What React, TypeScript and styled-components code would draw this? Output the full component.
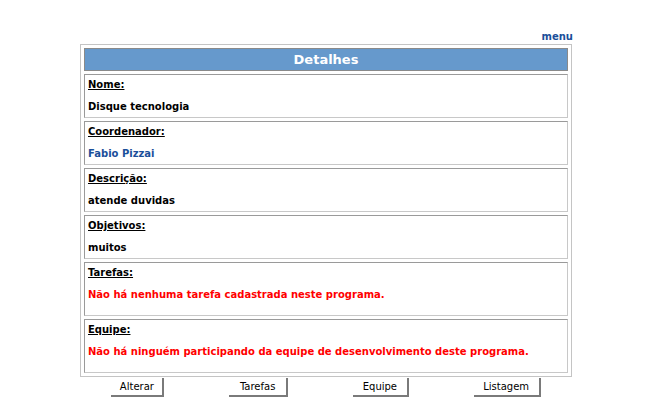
import styled, { createGlobalStyle } from "styled-components";

const Global = createGlobalStyle`
  * { box-sizing: border-box; }
  body { margin: 0; background: #fff; font-family: "DejaVu Sans", Verdana, sans-serif; font-size: 10px; }
`;

const Page = styled.div`
  width: 652px;
  display: flex;
  flex-direction: column;
  align-items: center;
  padding-top: 31px;
`;

const MenuRow = styled.div`
  width: 494px;
  display: flex;
  justify-content: flex-end;
  height: 13px;
`;

const MenuLink = styled.a`
  color: #1b4f9a;
  font-weight: bold;
  font-size: 10px;
  text-decoration: none;
`;

const Frame = styled.div`
  width: 492px;
  border: 1px solid #c4c4c4;
  padding: 3px;
  display: flex;
  flex-direction: column;
  gap: 3px;
`;

const Header = styled.div`
  height: 23px;
  background: #6699cc;
  border: 1px solid #8a8a8a;
  color: #fff;
  font-weight: bold;
  font-size: 13px;
  display: flex;
  align-items: center;
  justify-content: center;
`;

const Cell = styled.div<{ $tall?: boolean }>`
  height: ${(p) => (p.$tall ? 54 : 44)}px;
  border: 1px solid #c8c8c8;
  border-top-color: #9a9a9a;
  border-left-color: #9a9a9a;
  padding: 4px 3px 0;
  font-weight: bold;
  display: flex;
  flex-direction: column;
  gap: 11px;
`;

const Label = styled.span`
  text-decoration: underline;
  color: #000;
`;

const Value = styled.span<{ $color?: string }>`
  color: ${(p) => p.$color || "#000"};
`;

const Buttons = styled.div`
  width: 494px;
  display: flex;
  justify-content: space-around;
  padding-top: 1px;
`;

const Btn = styled.button<{ $w: number }>`
  width: ${(p) => p.$w}px;
  height: 19px;
  background: #fff;
  border: none;
  border-right: 2px solid #7a7a7a;
  border-bottom: 2px solid #7a7a7a;
  font-family: "DejaVu Sans", Verdana, sans-serif;
  font-size: 10px;
  padding: 0;
  color: #000;
`;

const rows: { label: string; value: string; color?: string; tall?: boolean }[] = [
  { label: "Nome:", value: "Disque tecnologia" },
  { label: "Coordenador:", value: "Fabio Pizzai", color: "#1b4f9a" },
  { label: "Descrição:", value: "atende duvidas" },
  { label: "Objetivos:", value: "muitos" },
  { label: "Tarefas:", value: "Não há nenhuma tarefa cadastrada neste programa.", color: "#ff0000", tall: true },
  { label: "Equipe:", value: "Não há ninguém participando da equipe de desenvolvimento deste programa.", color: "#ff0000", tall: true },
];

export default function App() {
  return (
    <Page>
      <Global />
      <MenuRow>
        <MenuLink href="#">menu</MenuLink>
      </MenuRow>
      <Frame>
        <Header>Detalhes</Header>
        {rows.map((r) => (
          <Cell key={r.label} $tall={r.tall}>
            <Label>{r.label}</Label>
            <Value $color={r.color}>{r.value}</Value>
          </Cell>
        ))}
      </Frame>
      <Buttons>
        <Btn $w={53}>Alterar</Btn>
        <Btn $w={59}>Tarefas</Btn>
        <Btn $w={56}>Equipe</Btn>
        <Btn $w={67}>Listagem</Btn>
      </Buttons>
    </Page>
  );
}
